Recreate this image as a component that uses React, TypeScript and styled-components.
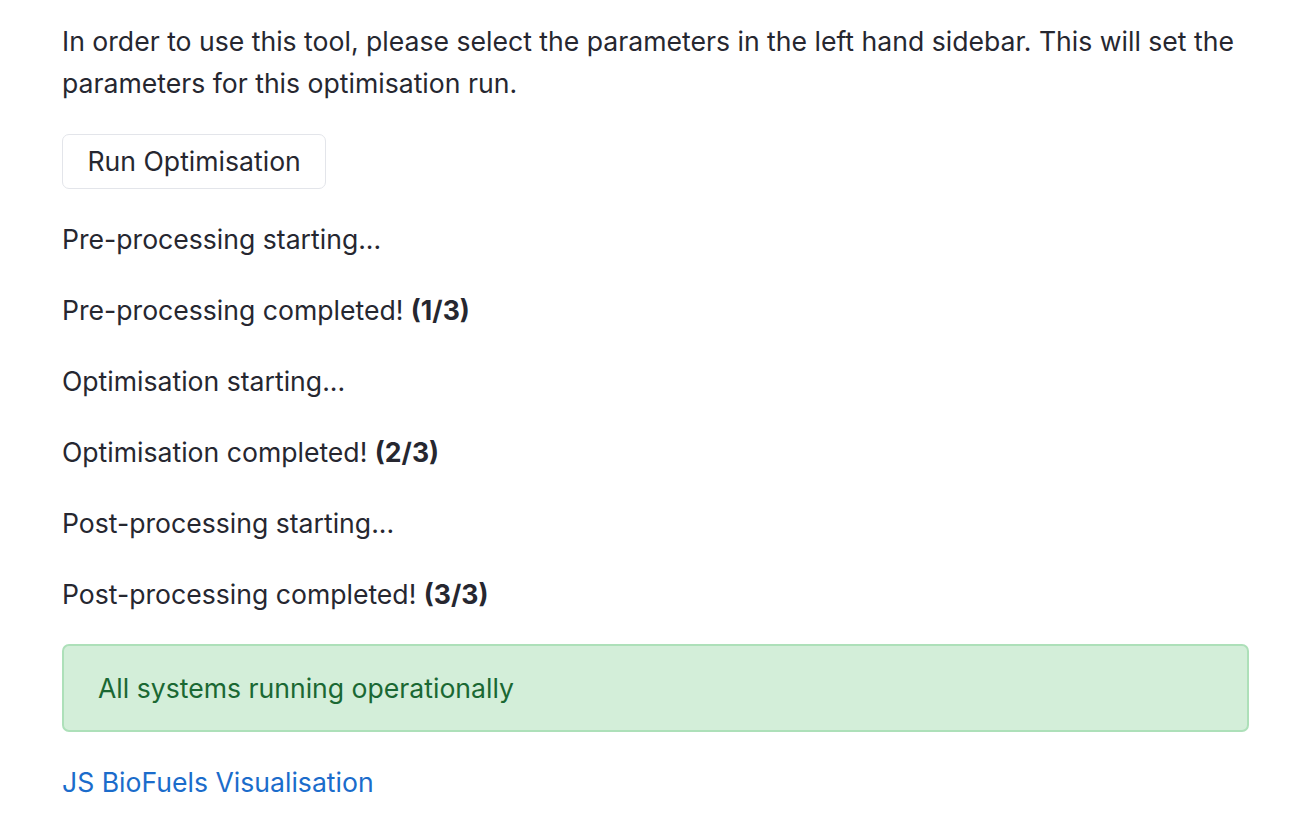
import React from "react";
import styled, { createGlobalStyle } from "styled-components";

const GlobalStyle = createGlobalStyle`
  html, body { margin: 0; padding: 0; background: #ffffff; }
  body {
    font-family: "Inter", "Noto Sans", sans-serif;
    color: #262730;
    -webkit-font-smoothing: antialiased;
  }
`;

const Page = styled.main`
  box-sizing: border-box;
  width: 1306px;
  padding: 20px 57px 20px 62px;
`;

const Stack = styled.div`
  display: flex;
  flex-direction: column;
  align-items: stretch;
  gap: 29px;
`;

const Paragraph = styled.p`
  margin: 0;
  font-size: 26.6px;
  line-height: 42px;
  font-weight: 400;
`;

const ButtonRow = styled.div`
  display: flex;
  margin-top: 1px;
`;

const Button = styled.button`
  box-sizing: border-box;
  height: 55px;
  padding: 0 24.5px;
  border: 1.5px solid #e3e5ea;
  border-radius: 7px;
  background: #ffffff;
  color: #262730;
  font-family: inherit;
  font-size: 26.6px;
  line-height: 1;
  cursor: pointer;
`;

const Status = styled.p`
  margin: 0;
  font-size: 26.6px;
  line-height: 42px;
  white-space: nowrap;
`;

const Strong = styled.strong`
  font-weight: 700;
`;

const Alert = styled.div`
  box-sizing: border-box;
  height: 88px;
  display: flex;
  align-items: center;
  padding: 0 34px;
  background: #d3eed9;
  border: 2px solid #ade0b9;
  border-radius: 7px;
  color: #1a6833;
  font-size: 26.6px;
  line-height: 42px;
`;

const Link = styled.a`
  align-self: flex-start;
  color: #1b6ccb;
  text-decoration: none;
  font-size: 26.6px;
  line-height: 42px;
`;

const steps: { text: string; step?: string }[] = [
  { text: "Pre-processing starting..." },
  { text: "Pre-processing completed!", step: "(1/3)" },
  { text: "Optimisation starting..." },
  { text: "Optimisation completed!", step: "(2/3)" },
  { text: "Post-processing starting..." },
  { text: "Post-processing completed!", step: "(3/3)" },
];

export default function App() {
  return (
    <>
      <GlobalStyle />
      <Page>
        <Stack>
          <Paragraph>
            In order to use this tool, please select the parameters in the left hand sidebar. This will set the
            parameters for this optimisation run.
          </Paragraph>
          <ButtonRow>
            <Button type="button">Run Optimisation</Button>
          </ButtonRow>
          {steps.map((s) => (
            <Status key={s.text}>
              {s.text}
              {s.step && (
                <>
                  {" "}
                  <Strong>{s.step}</Strong>
                </>
              )}
            </Status>
          ))}
          <Alert>All systems running operationally</Alert>
          <Link href="#">JS BioFuels Visualisation</Link>
        </Stack>
      </Page>
    </>
  );
}
